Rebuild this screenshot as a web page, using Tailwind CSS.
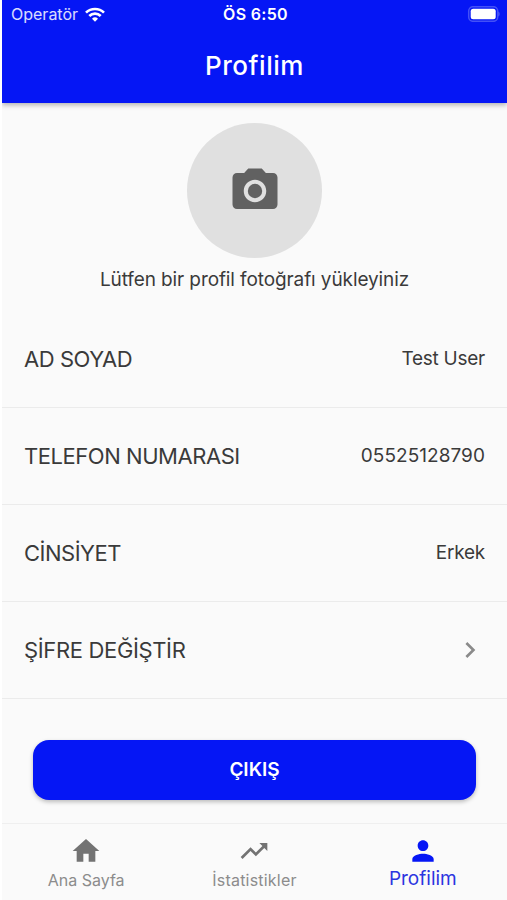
<!DOCTYPE html>
<html lang="tr">
<head>
    <meta charset="UTF-8">
    <meta name="viewport" content="width=device-width, initial-scale=1.0">
    <title>Profilim</title>
    <script src="https://cdn.jsdelivr.net/npm/@tailwindcss/browser@4"></script>
</head>
<body class="bg-white pl-[2px] font-['Inter','Liberation_Sans',sans-serif] text-[#3a3a3a]">
    <div class="flex h-[900px] flex-col overflow-hidden bg-[#fafafa]">
        <header class="h-[103px] shrink-0 bg-[#0516f5] text-white shadow-[0_2px_5px_rgba(0,0,0,0.3)]">
            <!-- Barra de estado -->
            <div class="grid h-[28px] grid-cols-3 items-center pl-[9px] pr-[7px] text-[16px]">
                <div class="flex items-center gap-[7px]">
                    <span class="text-white/85">Operatör</span>
                    <svg class="h-[15px] w-[20px]" viewBox="0 0 20 15" fill="none" stroke="#fff" stroke-width="2.7">
                        <path d="M1 5.6a13 13 0 0 1 18 0"/>
                        <path d="M4.3 9a8.2 8.2 0 0 1 11.4 0"/>
                        <path d="M10 14.8 7 11.7a4.4 4.4 0 0 1 6 0z" fill="#fff" stroke="none"/>
                    </svg>
                </div>
                <span class="text-center font-semibold tracking-[0.3px]">ÖS 6:50</span>
                <svg class="h-[16px] w-[33px] justify-self-end" viewBox="0 0 33 16">
                    <rect x="1.7" y="0.7" width="29" height="14.6" rx="4.3" fill="none" stroke="#fff" stroke-opacity="0.25" stroke-width="1.5"/>
                    <rect x="3.7" y="2.7" width="25" height="10.6" rx="2.5" fill="#fff"/>
                    <path d="M31.500 5.500v5c1.500-.8 1.500-4.200 0-5z" fill="#fff" fill-opacity="0.3"/>
                </svg>
            </div>
            <h1 class="flex h-[75px] items-center justify-center text-[26px] font-medium tracking-[0.55px]">Profilim</h1>
        </header>

        <main class="flex-1">
            <div class="flex flex-col items-center pt-[20px]">
                <div class="flex size-[135px] items-center justify-center rounded-full bg-[#e0e0e0]">
                    <svg class="size-[54px]" viewBox="0 0 24 24" fill="#616161">
                        <circle cx="12" cy="12" r="3.2"/>
                        <path d="M9 2 7.170 4H4c-1.100 0-2 .9-2 2v12c0 1.100.9 2 2 2h16c1.100 0 2-.9 2-2V6c0-1.100-.9-2-2-2h-3.170L15 2H9zm3 15c-2.760 0-5-2.240-5-5s2.240-5 5-5 5 2.240 5 5-2.240 5-5 5z"/>
                    </svg>
                </div>
                <p class="mt-[8px] h-[45px] text-[19px] leading-[28px] tracking-[-0.1px]">Lütfen bir profil fotoğrafı yükleyiniz</p>
            </div>

            <ul class="text-[19px]">
                <li class="flex h-[97px] items-center justify-between border-b border-[#ebebeb] pl-[22px] pr-[22px]">
                    <span class="text-[22px] tracking-[-0.45px]">AD SOYAD</span>
                    <span class="tracking-[-0.25px]">Test User</span>
                </li>
                <li class="flex h-[97px] items-center justify-between border-b border-[#ebebeb] pl-[22px] pr-[22px]">
                    <span class="text-[22px] tracking-[-0.45px]">TELEFON NUMARASI</span>
                    <span class="tracking-[0.05px]">05525128790</span>
                </li>
                <li class="flex h-[97px] items-center justify-between border-b border-[#ebebeb] pl-[22px] pr-[22px]">
                    <span class="text-[22px] tracking-[-0.5px]">CİNSİYET</span>
                    <span class="tracking-[-0.25px]">Erkek</span>
                </li>
                <li class="flex h-[97px] items-center justify-between border-b border-[#ebebeb] pl-[22px] pr-[21px]">
                    <span class="text-[22px] tracking-[-0.35px]">ŞİFRE DEĞİŞTİR</span>
                    <svg class="size-8" viewBox="0 0 24 24" fill="#8a8a8a"><path d="M10 6 8.590 7.410 13.170 12l-4.580 4.590L10 18l6-6z"/></svg>
                </li>
            </ul>

            <div class="px-[31px] pt-[41px]">
                <button class="h-[60px] w-full rounded-[16px] bg-[#0516f5] text-[19px] font-semibold text-white shadow-[0_2px_4px_rgba(0,0,0,0.25)]">ÇIKIŞ</button>
            </div>
        </main>

        <nav class="grid h-[77px] shrink-0 grid-cols-3 border-t border-[#efefef] pt-[11px] text-[16px] text-[#8c8c8c]">
            <a class="flex flex-col items-center">
                <svg class="size-8" viewBox="0 0 24 24" fill="#737373"><path d="M10 20v-6h4v6h5v-8h3L12 3 2 12h3v8z"/></svg>
                <span class="leading-[26px]">Ana Sayfa</span>
            </a>
            <a class="flex flex-col items-center">
                <svg class="size-8" viewBox="0 0 24 24" fill="#737373"><path d="m16 6 2.290 2.290-4.880 4.880-4-4L2 16.590 3.410 18l6-6 4 4 6.300-6.290L22 12V6z"/></svg>
                <span class="leading-[26px] tracking-[0.2px]">İstatistikler</span>
            </a>
            <a class="flex flex-col items-center text-[#2b35e0]">
                <svg class="size-8" viewBox="0 0 24 24" fill="#0516f5"><path d="M12 12c2.210 0 4-1.790 4-4s-1.790-4-4-4-4 1.790-4 4 1.790 4 4 4zm0 2c-2.670 0-8 1.340-8 4v2h16v-2c0-2.660-5.330-4-8-4z"/></svg>
                <span class="text-[19px] leading-[24px]">Profilim</span>
            </a>
        </nav>
    </div>
</body>
</html>
